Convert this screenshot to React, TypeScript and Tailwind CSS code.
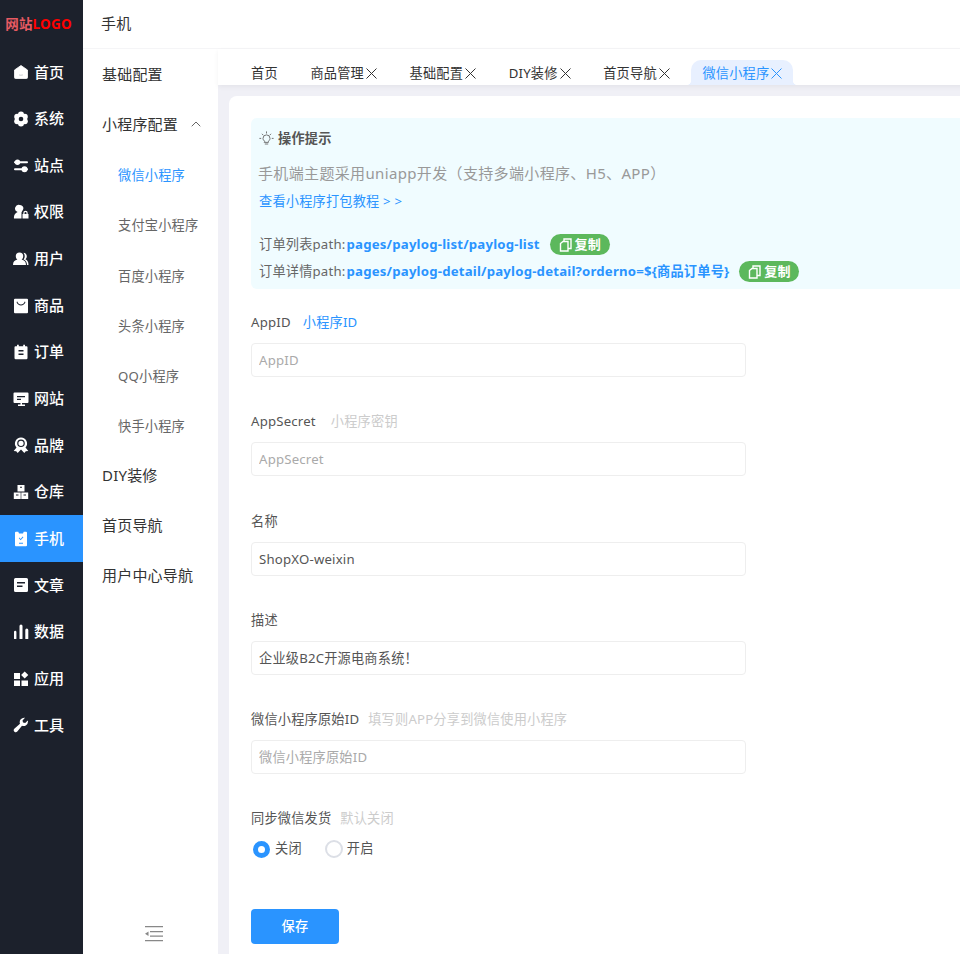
import { ChevronUp } from 'lucide-react';
import type { ReactNode } from 'react';

const Icon = ({ children }: { children: ReactNode }) => (
  <svg viewBox="0 0 16 16" className="h-[16px] w-[16px] shrink-0" fill="currentColor">
    {children}
  </svg>
);

const CloseIcon = () => (
  <svg viewBox="0 0 11 11" className="ml-[2px] h-[11px] w-[11px]" fill="none" stroke="currentColor" strokeWidth="1">
    <path d="M.5.5l10 10M10.500.5l-10 10" />
  </svg>
);

const navItems: { label: string; icon: ReactNode; active?: boolean }[] = [
  { label: '首页', icon: <path fillRule="evenodd" stroke="currentColor" strokeWidth=".8" strokeLinejoin="round" d="M8 1.500 14.500 6v7.500a1 1 0 0 1-1 1h-11a1 1 0 0 1-1-1V6ZM6 11c1 1 3 1 4 0l-.4-.5c-.7.6-2.500.6-3.200 0Z" /> },
  {
    label: '系统',
    icon: (
      <>
        <circle cx="8" cy="3.600" r="3" />
        <circle cx="8" cy="12.400" r="3" />
        <circle cx="4.200" cy="5.800" r="3" />
        <circle cx="11.800" cy="5.800" r="3" />
        <circle cx="4.200" cy="10.200" r="3" />
        <circle cx="11.800" cy="10.200" r="3" />
        <circle cx="8" cy="8" r="2.300" fill="#1c212c" />
      </>
    ),
  },
  {
    label: '站点',
    icon: (
      <>
        <circle cx="4.500" cy="4.300" r="2.700" />
        <rect x="1" y="3.300" width="14" height="2" rx="1" />
        <circle cx="11.500" cy="11.300" r="3" />
        <rect x="1" y="10.300" width="14" height="2" rx="1" />
      </>
    ),
  },
  { label: '权限', icon: <path fillRule="evenodd" d="M7 1a3.300 3.300 0 0 1 3 4.800L8.800 7.800l-.3.800V14.500H1c-.4-3 .8-5 3.600-6.500A3.300 3.300 0 0 1 7 1ZM9.500 10h.8V9a2.200 2.200 0 0 1 4.400 0v1h.8v4.500h-6Zm2-1v1h2V9a1 1 0 0 0-2 0Z" /> },
  { label: '用户', icon: <path d="M6.500 1.500a3.700 3.700 0 0 1 3.700 3.800c0 1.400-.6 2.600-1.600 3.300 2.800.7 4.400 2.300 4.400 5.400H0c0-3.100 1.600-4.700 4.400-5.400-1-.7-1.600-1.900-1.600-3.300A3.700 3.700 0 0 1 6.500 1.500ZM10.500 1.800c2 .2 3.300 1.700 3.300 3.500 0 1.200-.6 2.300-1.400 3 1.900.8 3.100 2.400 3.100 5.700h-1.500c0-3-1.500-4.800-3.400-5.600 1.300-1.400 1.700-4.400-.1-6.600Z" /> },
  { label: '商品', icon: <path fillRule="evenodd" d="M2 .8h12a1 1 0 0 1 1 1v12.500a1 1 0 0 1-1 1H2a1 1 0 0 1-1-1V1.800a1 1 0 0 1 1-1Zm2.300 2.700-.8.4C4.200 6 6 7.500 8 7.500s3.800-1.500 4.500-3.600l-.8-.4C11.100 5.200 9.700 6.500 8 6.500S4.900 5.200 4.300 3.500Z" /> },
  { label: '订单', icon: <path fillRule="evenodd" d="M4 .8h1.800v1.500h4.400V.8H12v1.500h1.500a1 1 0 0 1 1 1V14a1.200 1.200 0 0 1-1.200 1.200H2.700A1.200 1.200 0 0 1 1.500 14V3.300a1 1 0 0 1 1-1H4ZM5.500 6v1.500h5V6Zm0 3.500V11h5V9.500Z" /> },
  { label: '网站', icon: <path fillRule="evenodd" d="M1.500 1.500h13a1 1 0 0 1 1 1v8.500a1 1 0 0 1-1 1H9v1.500h3V15H5v-1.500h2.500V12h-6a1 1 0 0 1-1-1V2.500a1 1 0 0 1 1-1ZM4 5v1.200h8V5Zm0 2.800V9h4V7.800Z" /> },
  { label: '品牌', icon: <path fillRule="evenodd" d="M8 .5a6 6 0 0 1 4.500 10l2.800 3.400-2.500.3L11.300 16 8 12.500 4.700 16l-1.500-1.800-2.500-.3 2.800-3.400A6 6 0 0 1 8 .5ZM8 2.500a3.800 3.800 0 1 0 0 7.600 3.800 3.800 0 0 0 0-7.600Zm0 1.200a2.600 2.600 0 1 1 0 5.200 2.600 2.600 0 0 1 0-5.200Z" /> },
  { label: '仓库', icon: <path fillRule="evenodd" d="M4.500 1h7v6.500h-7ZM7 2.800v1h2v-1ZM.8 8.500h6.900V15H.8Zm2.200 2v1h2.500v-1Zm5.300-2h6.900V15H8.300Zm2.200 2v1H13v-1Z" /> },
  { label: '手机', active: true, icon: <path fillRule="evenodd" d="M3 .8h2.300L6 2.500h4l.7-1.700H13a1 1 0 0 1 1 1v12.500a1 1 0 0 1-1 1H3a1 1 0 0 1-1-1V1.800a1 1 0 0 1 1-1Zm2.800 6.400 1.800 2 2.800-3-.7-.6-2.100 2.300-1.200-1.300ZM6 11.800v1h4v-1Z" /> },
  { label: '文章', icon: <path fillRule="evenodd" d="M2.500 1h11A1.500 1.500 0 0 1 15 2.500v11a1.500 1.500 0 0 1-1.500 1.500h-11A1.500 1.500 0 0 1 1 13.500v-11A1.500 1.500 0 0 1 2.500 1ZM4 5v1.500h8V5Zm0 3.500V10h5.500V8.500Z" /> },
  { label: '数据', icon: <path d="M1 8a1.200 1.200 0 0 1 2.400 0v6.500a.5.500 0 0 1-.5.500H1.500a.5.500 0 0 1-.5-.5Zm5.500-6a1.500 1.500 0 0 1 3 0v12.500a.5.500 0 0 1-.5.500H7a.5.500 0 0 1-.5-.5Zm5.800 4a1.500 1.500 0 0 1 3 0v8.500a.5.500 0 0 1-.5.500h-2a.5.500 0 0 1-.5-.5Z" /> },
  { label: '应用', icon: <path d="M1 2h6v6H1Zm0 7.500h6V15H1ZM8.500 9.500H15V15H8.500Zm3.200-9L15.300 4l-3.600 3.600L8.100 4Z" /> },
  { label: '工具', icon: <path d="M15 4.500a4.500 4.500 0 0 1-6 4.200L4.300 14.500a2 2 0 0 1-3-2.700L7 6.800A4.500 4.500 0 0 1 12 .8L9.500 3.500 10 5.500l2.200.6L14.800 3.500c.1.300.2.700.2 1Z" /> },
];

const subItems = [
  { label: '基础配置' },
  { label: '小程序配置', open: true },
  { label: '微信小程序', child: true, active: true },
  { label: '支付宝小程序', child: true },
  { label: '百度小程序', child: true },
  { label: '头条小程序', child: true },
  { label: 'QQ小程序', child: true },
  { label: '快手小程序', child: true },
  { label: 'DIY装修' },
  { label: '首页导航' },
  { label: '用户中心导航' },
];

const tabs = [
  { label: '首页' },
  { label: '商品管理', close: true },
  { label: '基础配置', close: true },
  { label: 'DIY装修', close: true },
  { label: '首页导航', close: true },
];

const fields = [
  { label: 'AppID', hint: '小程序ID', hintClass: 'ml-[1px] text-[#2a94ff]', placeholder: 'AppID' },
  { label: 'AppSecret', hint: '小程序密钥', hintClass: 'ml-[4px] text-[#ccc]', placeholder: 'AppSecret' },
  { label: '名称', value: 'ShopXO-weixin' },
  { label: '描述', value: '企业级B2C开源电商系统！' },
  { label: '微信小程序原始ID', hint: '填写则APP分享到微信使用小程序', hintClass: '-ml-[2px] text-[#ccc]', placeholder: '微信小程序原始ID' },
];

const CopyBadge = () => (
  <span className="ml-[10px] inline-flex h-[21px] w-[60px] items-center justify-center gap-[2px] rounded-full bg-[#5cb85c] text-[13px] font-bold text-white">
    <svg viewBox="0 0 14 14" className="h-[14px] w-[14px]" fill="none" stroke="currentColor" strokeWidth="1.4">
      <path d="M5 3.500V1h7v9.500H9.500M1.500 5.500 4 3.500h5V13H1.500Z" />
    </svg>
    复制
  </span>
);

export default function App() {
  return (
    <div className="h-[954px] w-[960px] overflow-hidden bg-white font-['Noto_Sans','Noto_Sans_CJK_SC',sans-serif] text-[13.2px] tracking-[0.2px] text-[#333]">
      <div className="flex h-full w-[1280px]">
        {/* Main nav */}
        <aside className="flex w-[83px] shrink-0 flex-col bg-[#1c212c]">
          <div className="flex h-[49px] items-center justify-center pr-[6px] pb-[1px] text-[13.5px] font-bold text-[#f00]">
            <span className="text-[#e85a62]">网站</span>LOGO
          </div>
          {navItems.map((item) => (
            <div
              key={item.label}
              className={`flex h-[46.65px] items-center gap-[5px] pl-[13px] text-[15px] font-medium tracking-normal text-white ${item.active ? 'bg-[#2a94ff]' : ''}`}
            >
              <Icon>{item.icon}</Icon>
              <span className="pb-[1px]">{item.label}</span>
            </div>
          ))}
        </aside>

        {/* Sub nav */}
        <aside className="flex w-[135px] shrink-0 flex-col bg-white shadow-[2px_0_4px_rgba(0,0,0,0.02)]">
          <div className="flex h-[49px] items-center border-b border-[#f5f5f7] pb-[1px] pl-[18px] text-[15px]">手机</div>
          {subItems.map((item) => (
            <div
              key={item.label}
              className={`flex h-[50.1px] items-center ${item.child ? 'pt-[4px] pl-[35px]' : 'pl-[19px] text-[15px]'} ${item.child && !item.active ? 'text-[#666]' : ''} ${item.active ? 'text-[#2a94ff]' : ''}`}
            >
              {item.label}
              {item.open && <ChevronUp className="ml-[10px] h-[16px] w-[16px] text-[#666]" strokeWidth={1.5} />}
            </div>
          ))}
          <div className="mt-auto flex h-[30px] items-start justify-center pt-[2px] pl-[6px]">
            <svg viewBox="0 0 18 16" className="h-[16px] w-[18px]" fill="#888">
              <path d="M0 0h18v1.300H0ZM5 5h13v1.300H5ZM5 9.500h13v1.300H5ZM0 14h18v1.300H0ZM0 7.700 3.500 5.500v4.500Z" />
            </svg>
          </div>
        </aside>

        <main className="flex min-w-0 flex-1 flex-col bg-[#f0f0f6]">
          {/* Top bar */}
          <div className="h-[49px] shrink-0 border-b border-[#f5f5f7] bg-white" />

          {/* Tabs */}
          <div className="relative flex h-[36px] shrink-0 items-end gap-[10.6px] bg-white pl-[22px] shadow-[0_2px_5px_rgba(0,0,0,0.05)]">
            {tabs.map((tab) => (
              <div key={tab.label} className="flex h-[25px] items-center px-[11px] pt-[2px]">
                {tab.label}
                {tab.close && <CloseIcon />}
              </div>
            ))}
            <div className="relative flex h-[25px] items-center rounded-t-[10px] bg-[#e8f0ff] px-[11px] pt-[2px] text-[#2a94ff]">
              微信小程序
              <CloseIcon />
              <span className="absolute bottom-0 left-[-5px] h-[5px] w-[5px] bg-[radial-gradient(circle_at_0_0,transparent_5px,#e8f0ff_5.5px)]" />
              <span className="absolute right-[-5px] bottom-0 h-[5px] w-[5px] bg-[radial-gradient(circle_at_100%_0,transparent_5px,#e8f0ff_5.5px)]" />
            </div>
          </div>

          {/* Content card */}
          <div className="mt-[11px] ml-[11px] flex-1 rounded-tl-[8px] bg-white px-[22px] pt-[22px]">
            <div className="h-[171px] rounded-[6px] bg-[#f0fcff] pt-[10px] pl-[8px]">
              <div className="flex h-[21px] items-center gap-[4px] font-bold text-[#555]">
                <svg viewBox="0 0 15 15" className="h-[15px] w-[15px]" fill="none" stroke="#666" strokeWidth=".9" strokeLinecap="round">
                  <path d="M5.600 10.300C4.600 9.600 4 8.500 4 7.400a3.500 3.500 0 0 1 7 0c0 1.100-.6 2.200-1.600 2.900v1.100H5.600ZM6.200 13h2.600M7.500 .8v1.300M1.800 7.400H.8M14.200 7.400h-1M3.200 3.100l.8.8M11.800 3.100l-.8.8" />
                </svg>
                操作提示
              </div>
              <p className="mt-[13px] -ml-[1px] text-[15px] leading-[22px] tracking-[0.35px] text-[#999]">手机端主题采用uniapp开发（支持多端小程序、H5、APP）</p>
              <p className="mt-[7px] leading-[20px] text-[#2a94ff]">查看小程序打包教程 &gt; &gt;</p>
              <div className="mt-[23px] flex h-[21px] items-center text-[#666]">
                订单列表path:<b className="ml-[1px] text-[#2a94ff]">pages/paylog-list/paylog-list</b>
                <CopyBadge />
              </div>
              <div className="mt-[6px] flex h-[21px] items-center text-[#666]">
                订单详情path:<b className="ml-[1px] text-[#2a94ff]">pages/paylog-detail/paylog-detail?orderno=${'{'}商品订单号{'}'}</b>
                <CopyBadge />
              </div>
            </div>

            <form className="mt-[23px] w-[495px]">
              {fields.map((f) => (
                <div key={f.label} className="mb-[34.25px]">
                  <div className="flex h-[22px] items-center gap-[11px] text-[#555]">
                    {f.label}
                    {f.hint && <span className={f.hintClass}>{f.hint}</span>}
                  </div>
                  <input
                    readOnly
                    value={f.value ?? ''}
                    placeholder={f.placeholder}
                    className="mt-[9px] block h-[34px] w-full rounded-[4px] border border-[#eee] bg-white px-[7px] text-[#555] outline-none placeholder:text-[#aaa]"
                  />
                </div>
              ))}

              <div className="flex h-[22px] items-center gap-[9px] text-[#555]">
                同步微信发货
                <span className="text-[#ccc]">默认关闭</span>
              </div>
              <div className="mt-[8px] flex h-[22px] items-center text-[#555]">
                <span className="ml-[2px] h-[17px] w-[17px] rounded-full border-[5px] border-[#2a94ff] bg-white" />
                <span className="ml-[5px]">关闭</span>
                <span className="ml-[23px] h-[18px] w-[18px] rounded-full border-2 border-[#dcdfe6] bg-white" />
                <span className="ml-[4px]">开启</span>
              </div>
              <button type="button" className="mt-[49px] h-[35px] w-[88px] rounded-[4px] bg-[#2a94ff] font-medium text-white">
                保存
              </button>
            </form>
          </div>
        </main>
      </div>
    </div>
  );
}
